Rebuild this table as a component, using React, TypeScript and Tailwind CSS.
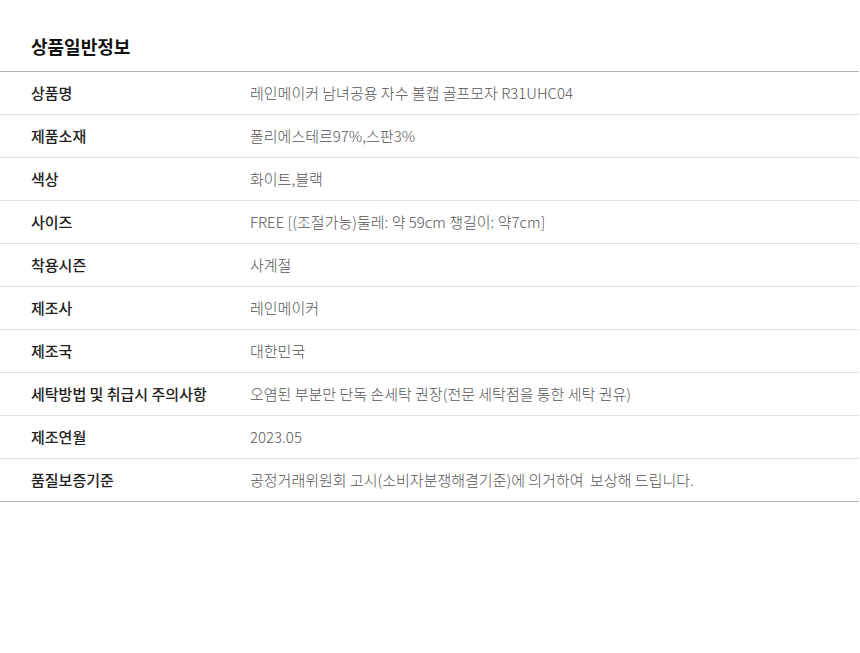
const rows: Array<[string, string]> = [
  ["상품명", "레인메이커 남녀공용 자수 볼캡 골프모자 R31UHC04"],
  ["제품소재", "폴리에스테르97%,스판3%"],
  ["색상", "화이트,블랙"],
  ["사이즈", "FREE [(조절가능)둘레: 약 59cm 챙길이: 약7cm]"],
  ["착용시즌", "사계절"],
  ["제조사", "레인메이커"],
  ["제조국", "대한민국"],
  ["세탁방법 및 취급시 주의사항", "오염된 부분만 단독 손세탁 권장(전문 세탁점을 통한 세탁 권유)"],
  ["제조연월", "2023.05"],
  ["품질보증기준", "공정거래위원회 고시(소비자분쟁해결기준)에 의거하여  보상해 드립니다."],
];

export default function App() {
  return (
    <div
      className="min-h-[653px] w-[860px] bg-white"
      style={{ fontFamily: '"Noto Sans CJK KR", "Noto Sans", sans-serif' }}
    >
      <h2 className="h-[71px] pl-[31px] pt-[33px] text-[18px] font-bold leading-[26px] text-[#111]">
        상품일반정보
      </h2>
      <table className="w-[859px] border-collapse border-t border-b border-[#b3b3b3]">
        <tbody>
          {rows.map(([label, value], i) => (
            <tr key={label} className={i < rows.length - 1 ? "border-b border-[#e0e0e0]" : ""}>
              <th className="h-[43px] w-[250px] pl-[31px] text-left align-middle text-[15px] font-medium text-[#222]">
                {label}
              </th>
              <td className="h-[43px] whitespace-pre text-left align-middle text-[15px] font-light text-[#555]">
                {value}
              </td>
            </tr>
          ))}
        </tbody>
      </table>
    </div>
  );
}
